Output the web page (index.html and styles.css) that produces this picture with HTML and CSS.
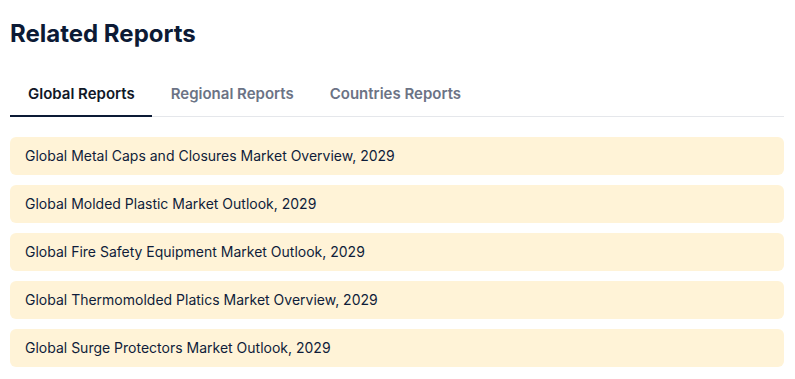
FILE: index.html
```html
<!DOCTYPE html>
<html lang="en">
<head>
    <meta charset="UTF-8">
    <meta name="viewport" content="width=device-width, initial-scale=1.0">
    <title>Related Reports</title>
    <link rel="stylesheet" href="styles.css">
</head>
<body>
    <div class="container">
        <h2 class="title">Related Reports</h2>
        <div class="tabs">
            <div class="tab active">Global Reports</div>
            <div class="tab">Regional Reports</div>
            <div class="tab">Countries Reports</div>
        </div>
        <div class="reports">
            <a class="report" href="#">Global Metal Caps and Closures Market Overview, 2029</a>
            <a class="report" href="#">Global Molded Plastic Market Outlook, 2029</a>
            <a class="report" href="#">Global Fire Safety Equipment Market Outlook, 2029</a>
            <a class="report" href="#">Global Thermomolded Platics Market Overview, 2029</a>
            <a class="report" href="#">Global Surge Protectors Market Outlook, 2029</a>
        </div>
    </div>
</body>
</html>
```

FILE: styles.css
```css
body {margin: 0; font-family: Inter, "Noto Sans", sans-serif; background: #ffffff; color: #0f1d3a;}
.container {padding: 0 11px 0 10px;}

.title {margin: 0; padding-top: 18px; font-size: 24px; font-weight: 700; line-height: 32px; color: #0c1a35;}

.tabs {display: flex; margin-top: 29px; border-bottom: 1px solid #e5e7eb;}
.tab {padding: 0 17px 0 18px; height: 36px; line-height: 30px; font-size: 15px; font-weight: 600; color: #6b7385; border-bottom: 2px solid transparent; margin-bottom: -1px;}
.tab + .tab {padding-left: 19px;}
.tab.active {color: #111827; border-bottom-color: #0c1a35;}

.reports {display: flex; flex-direction: column; gap: 10px; margin-top: 20px;}
.report {display: block; background: #fff3d7; border-radius: 6px; padding: 0 15px; height: 38px; line-height: 38px; font-size: 14px; color: #0f1d3a; text-decoration: none;}
```
